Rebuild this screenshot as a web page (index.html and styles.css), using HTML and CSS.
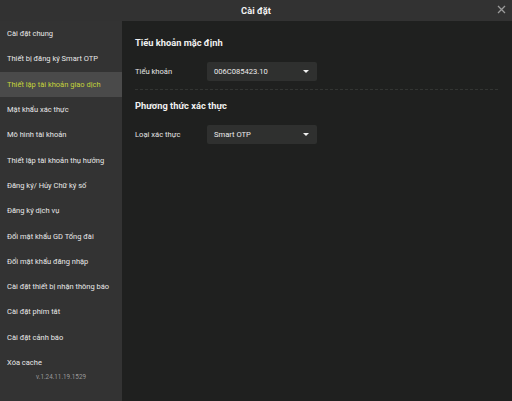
FILE: index.html
```html
<!DOCTYPE html>
<html lang="vi">
<head>
<meta charset="utf-8">
<link rel="stylesheet" href="styles.css">
</head>
<body>
<div class="app">
  <header class="topbar">
    <span class="title">Cài đặt</span>
    <span class="close">
      <svg width="9" height="9" viewBox="0 0 9 9"><path d="M1 1L8 8M8 1L1 8" stroke="#9a9a9a" stroke-width="1.3" fill="none"/></svg>
    </span>
  </header>
  <div class="body">
    <nav class="sidebar">
      <div class="item">Cài đặt chung</div>
      <div class="item">Thiết bị đăng ký Smart OTP</div>
      <div class="item active">Thiết lập tài khoản giao dịch</div>
      <div class="item">Mật khẩu xác thực</div>
      <div class="item">Mô hình tài khoản</div>
      <div class="item">Thiết lập tài khoản thụ hưởng</div>
      <div class="item">Đăng ký/ Hủy Chữ ký số</div>
      <div class="item">Đăng ký dịch vụ</div>
      <div class="item">Đổi mật khẩu GD Tổng đài</div>
      <div class="item">Đổi mật khẩu đăng nhập</div>
      <div class="item">Cài đặt thiết bị nhận thông báo</div>
      <div class="item">Cài đặt phím tắt</div>
      <div class="item">Cài đặt cảnh báo</div>
      <div class="item">Xóa cache</div>
      <div class="version">v.1.24.11.19.1529</div>
    </nav>
    <main class="content">
      <section class="section">
        <h2 class="heading">Tiểu khoản mặc định</h2>
        <div class="row">
          <span class="label">Tiểu khoản</span>
          <div class="select"><span>006C085423.10</span><span class="caret"></span></div>
        </div>
      </section>
      <div class="divider"></div>
      <section class="section">
        <h2 class="heading">Phương thức xác thực</h2>
        <div class="row">
          <span class="label">Loại xác thực</span>
          <div class="select"><span>Smart OTP</span><span class="caret"></span></div>
        </div>
      </section>
    </main>
  </div>
</div>
</body>
</html>
```
FILE: styles.css
```css
* { box-sizing: border-box; margin: 0; padding: 0; }
html, body { width: 512px; height: 401px; overflow: hidden; }
body {
  background: #1f201f;
  font-family: Roboto, "Noto Sans", sans-serif;
  color: #e6e6e6;
}
.app { display: flex; flex-direction: column; height: 401px; }
.topbar {
  height: 21px;
  background: #323232;
  display: flex;
  align-items: center;
  justify-content: center;
  position: relative;
  flex-shrink: 0;
}
.title { font-size: 9.3px; font-weight: 700; color: #f2f2f2; }
.close { position: absolute; right: 6px; top: 5px; width: 9px; height: 9px; display: flex; }
.body { display: flex; flex: 1; min-height: 0; }
.sidebar {
  width: 122px;
  background: #333333;
  display: flex;
  flex-direction: column;
  flex-shrink: 0;
}
.item {
  height: 25.3px;
  display: flex;
  align-items: center;
  padding-left: 7px;
  font-size: 7.5px;
  color: #e8e8e8;
  white-space: nowrap;
}
.item.active { background: #4a4a4a; color: #c4d33a; }
.version {
  text-align: center;
  font-size: 6.3px;
  color: #9a9a9a;
  margin-top: -2px;
  line-height: 8px;
}
.content { flex: 1; padding: 16px 14px 0 13px; }
.section { display: flex; flex-direction: column; }
.heading { font-size: 9.3px; font-weight: 700; color: #f0f0f0; line-height: 12px; margin-bottom: 13px; }
.row { display: flex; align-items: center; }
.label { width: 72px; font-size: 7.6px; color: #e4e4e4; }
.select {
  width: 110px;
  height: 19px;
  background: #2f302f;
  border-radius: 2px;
  display: flex;
  align-items: center;
  justify-content: space-between;
  padding: 0 8px 0 7px;
  font-size: 7.6px;
  color: #ececec;
}
.caret {
  width: 0; height: 0;
  border-left: 3.5px solid transparent;
  border-right: 3.5px solid transparent;
  border-top: 3.5px solid #f0f0f0;
}
.divider {
  margin: 8px 0 10px 0;
  height: 0;
  border-top: 1px dashed #333533;
}
```
